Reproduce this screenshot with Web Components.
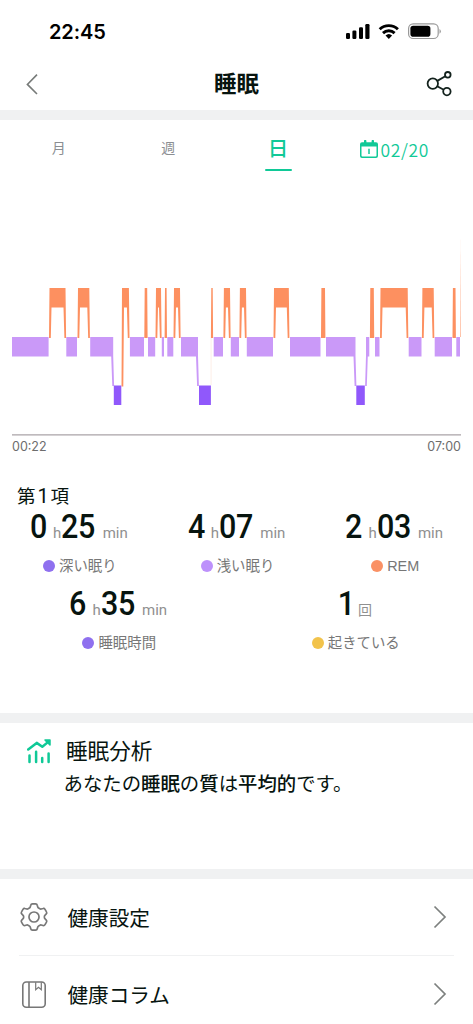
<!DOCTYPE html>
<html lang="ja">
<head>
<meta charset="utf-8">
<title>睡眠</title>
<style>
html,body{margin:0;padding:0;background:#fff}
body{width:473px;height:1024px;overflow:hidden;font-family:"Noto Sans CJK JP",sans-serif;color:#07140f}
</style>
</head>
<body>
<sleep-app></sleep-app>
<script>
const define = (name, html, setup) => customElements.define(name, class extends HTMLElement {
  connectedCallback() {
    if (this.shadowRoot) return;
    const root = this.attachShadow({mode: 'open'});
    root.innerHTML = html;
    if (setup) setup(this, root);
  }
});

define('status-bar', `
<style>
:host{display:flex;height:57px;box-sizing:border-box;padding:7px 31px 0 49px;align-items:center;justify-content:space-between}
.time{font:600 20px/24px Inter,sans-serif;color:#000;letter-spacing:-0.1px}
svg{display:block}
</style>
<span class="time">22:45</span>
<svg width="98" height="20" viewBox="344 22 98 20">
<g><rect x="346" y="33" width="4" height="6" rx="1.2"/><rect x="352.4" y="30.5" width="4" height="8.5" rx="1.2"/><rect x="359" y="27.3" width="4" height="11.7" rx="1.2"/><rect x="365.3" y="24" width="4.2" height="15" rx="1.2"/></g>
<g fill="none" stroke="#000" stroke-width="2.9"><path d="M379.7 29.3a13 13 0 0 1 18.2 0"/><path d="M383 33.1a8.4 8.4 0 0 1 11.6 0"/></g>
<path d="M388.8 38.9l-3.3-3.3a4.8 4.8 0 0 1 6.6 0z"/>
<rect x="408.6" y="23.9" width="29.6" height="14.6" rx="4.6" fill="none" stroke="#999" stroke-width="1.2"/>
<rect x="410.4" y="25.7" width="20" height="11" rx="2.8"/>
<path d="M439.5 28.9a2.8 2.8 0 0 1 0 4.8z" fill="#999"/>
</svg>`);

define('nav-bar', `
<style>
:host{display:grid;grid-template-columns:60px 1fr 60px;height:53px;align-items:center}
h1{margin:0;text-align:center;font-weight:700;font-size:22.4px;line-height:32px;padding-bottom:4px}
svg{display:block}
</style>
<svg width="60" height="53" viewBox="0 57 60 53" fill="none" stroke="#777b79" stroke-width="1.6"><path d="M37 74.6l-9.6 9.8 9.6 9.6"/></svg>
<h1><slot></slot></h1>
<svg width="60" height="53" viewBox="413 57 60 53" fill="none" stroke="#13221d" stroke-width="1.8"><circle cx="432.8" cy="83.6" r="5.2"/><circle cx="447.8" cy="74.8" r="2.8"/><circle cx="446.9" cy="91.6" r="3.7"/><path d="M437.3 80.9l8-4.7M437.2 86.2l6.5 3.6"/></svg>`);

define('section-gap', `<style>:host{display:block;height:10px;background:#f0f1f2}</style>`);

define('range-tabs', `
<style>
:host{display:grid;grid-template-columns:repeat(4,109.5px);padding-left:4px;height:60px;text-align:center;color:#8b8e92;font-size:14px}
div{height:51px;line-height:55px;box-sizing:border-box}
.on{color:#10c997;font-size:20.5px;font-weight:500;display:flex;flex-direction:column;align-items:center;line-height:55px;justify-content:space-between;padding-left:.5px}
.on span{height:48px}
.on i{width:27px;height:2.5px;border-radius:1px;background:#10c997;flex:none}
.date{color:#10c997;display:flex;align-items:center;justify-content:center;padding-left:14px;font-weight:350;font-size:17.5px;letter-spacing:.6px;line-height:24px;gap:3px;height:59px}
.date svg{margin-top:-1px}
</style>
<div>月</div><div>週</div><div class="on"><span>日</span><i></i></div>
<div class="date"><svg width="18" height="18" viewBox="0 0 18 18"><path fill="#10c997" fill-rule="evenodd" d="M2 2.2h2V1a1.2 1.2 0 0 1 2.4 0v1.2h5.2V1A1.2 1.2 0 0 1 14 1v1.2h2a2 2 0 0 1 2 2V16a2 2 0 0 1-2 2H2a2 2 0 0 1-2-2V4.200a2 2 0 0 1 2-2zM1.500 6.600v9q0 .9.9.9h13.200q.9 0 .9-.9v-9z"/><path d="M9 8.800v5.200" stroke="#10c997" stroke-width="1.500"/></svg><span>02/20</span></div>`);

define('sleep-chart', `
<style>
:host{display:block;height:300px;font:12.5px/16px Inter,sans-serif;color:#6d6d6d}
svg{display:block}
.axis{display:flex;justify-content:space-between;padding:3px 12px 0}
</style>
<svg width="473" height="256" viewBox="0 180 473 256">
<path class="light" fill="#ca99f8"/><path class="rem" fill="#fd9060"/><path class="deep" fill="#9058fb"/>
<path d="M211.1 338v47" stroke="#fd9060" stroke-width=".7" opacity=".2"/>
<path d="M460.6 239l.4 98h-.9z" fill="#fd9060" opacity=".6"/>
<path d="M12 434.800h449" stroke="#aaa3a7" stroke-width="1.200"/>
</svg>
<div class="axis"><span>00:22</span><span>07:00</span></div>`, (el, root) => {
  const box = (y) => ([a, b]) => `M${a} ${y}H${b}V${y + 19.5}H${a}Z`;
  const light = [[12,48.6],[66.3,77],[90.2,113.2],[129.9,144],[148,155.2],[161.8,164],[167.3,173.3],[181,198],[213.7,223],[230.8,239],[246.8,273],[290,320.5],[326,355.5],[366,369.3],[375,379.5],[408.7,421.5],[434.7,452],[456.3,460]];
  const rem = [[49.5,65.5],[78,89.3],[122,128.9],[156,161],[174,180],[223.9,230],[239.9,246],[274,288.8],[380.5,407.7],[422.4,433.7]];
  const thin = [[144.7,147.2],[165,166.6],[211.3,212.7],[321.4,325],[370.3,373.8],[452.9,455.5]];
  const arch = ([a, b]) => {
    const foot = a === 122 ? 386.5 : 338;
    return `M${a} 288H${b}L${b + .6} 338H${b - 1.1}L${b - 2} 307.5H${a + 2}L${a + 1.3} ${foot}H${a - .5}Z`;
  };
  const fall = x => `M${x - 2} 356H${x}L${x + .9} 386H${x - .9}Z`;
  root.querySelector('.light').setAttribute('d', light.map(box(337)).join('') + [113.2,198,355.5].map(fall).join('') + 'M366 356H367.8L366.8 386H365.1Z');
  root.querySelector('.rem').setAttribute('d', rem.map(arch).join('') + thin.map(([a,b]) => `M${a} 288H${b}L${b + .4} 338H${a - .4}Z`).join(''));
  root.querySelector('.deep').setAttribute('d', [[113.8,121.3],[199,210.9],[356.3,364.8]].map(box(385.5)).join(''));
});

define('sleep-stat', `
<style>
:host{display:flex;flex-direction:column;align-items:center;height:76.5px;box-sizing:border-box}
.value{height:37px;line-height:37px;display:flex;align-items:baseline;font-family:Roboto,"Noto Sans CJK JP",sans-serif;white-space:nowrap}
b{font-weight:500;font-size:33.5px;letter-spacing:-.4px;display:block;transform:scaleX(.91)}
b.hh{margin-right:-1.5px;transform-origin:left}
b.mm{margin-right:-3.5px;transform-origin:left}
small{font-weight:400;font-size:15px;color:#909090}
.h{margin:0 0 0 6px}.m{margin-left:7.5px}.c{margin-left:2px;font-size:14px}
.label{display:flex;align-items:center;gap:4px;font-family:"Liberation Sans","Noto Sans CJK JP",sans-serif;font-size:14.4px;line-height:20px;color:#777;margin-top:11px;padding-left:2px}
.label i{width:12px;height:12px;border-radius:50%;background:var(--dot)}
</style>
<div class="value"></div><div class="label"><i></i><slot></slot></div>`, (el, root) => {
  const h = el.getAttribute('hours'), m = el.getAttribute('minutes'), c = el.getAttribute('count');
  root.querySelector('.value').innerHTML = c ? `<b>${c}</b><small class="c">回</small>` : `<b class="hh">${h}</b><small class="h">h</small><b class="mm">${m}</b><small class="m">min</small>`;
});

define('sleep-summary', `
<style>
:host{display:block;height:233px}
h2{margin:0;padding:2px 0 0 17px;font-weight:400;font-size:18.5px;line-height:26px;height:26px;letter-spacing:.1px}
h2 span{display:inline-block;width:15px;text-align:center;font-family:Roboto,sans-serif;font-size:20px}
.row{display:grid;grid-template-columns:repeat(3,1fr)}
.two{grid-template-columns:repeat(2,1fr)}
</style>
<h2>第<span>1</span>項</h2>
<div class="row">
<sleep-stat hours="0" minutes="25" style="--dot:#8f70ef">深い眠り</sleep-stat>
<sleep-stat hours="4" minutes="07" style="--dot:#bd91fb">浅い眠り</sleep-stat>
<sleep-stat hours="2" minutes="03" style="--dot:#fa9165">REM</sleep-stat>
</div>
<div class="row two">
<sleep-stat hours="6" minutes="35" style="--dot:#8f70ef">睡眠時間</sleep-stat>
<sleep-stat count="1" style="--dot:#f2c34b">起きている</sleep-stat>
</div>`);

define('sleep-analysis', `
<style>
:host{display:grid;grid-template-columns:39px 1fr;height:146px;box-sizing:border-box;padding:12px 0 0 27px;align-content:start}
h2{margin:-1px 0 1px;font-weight:400;font-size:21.6px;line-height:32px}
p{margin:0 0 0 -2.5px;grid-column:2;font-size:19.4px;line-height:32px;white-space:nowrap}
b{font-weight:500}
svg{margin-top:4px}
</style>
<svg width="24" height="25" viewBox="27 739 24 25" fill="none" stroke="#10c997" stroke-width="2.5" stroke-linecap="round" stroke-linejoin="round"><path d="M28.2 749.5l8.5-6.6 5.600 3.900 6-4.900M29.5 755.6v6.4M36.1 751.8v10.2M42.2 757.9v4.1M48.6 753.6v8.4"/><path d="M45 740h5v5z" fill="#10c997" stroke-width="1.500"/></svg>
<h2>睡眠分析</h2>
<p>あなたの<b>睡眠</b>の<b>質</b>は<b>平均的</b>です。</p>`);

define('menu-row', `
<style>
:host{display:grid;grid-template-columns:48.5px 1fr 14px;align-items:center;height:77px;margin:0 19px;padding-right:7px;border-bottom:1px solid #f0f1f2;box-sizing:border-box;font-size:20.6px;line-height:30px}
svg{display:block}
span{padding-bottom:1px}
::slotted(svg){display:block}
</style>
<slot name="icon"></slot><span><slot></slot></span>
<svg width="14" height="24" viewBox="0 0 14 24" fill="none" stroke="#7d807f" stroke-width="1.7"><path d="M1.5 1.500l10.5 10.500L1.5 22.500"/></svg>`);

define('sleep-app', `
<style>
:host{display:block;width:473px}
</style>
<status-bar></status-bar>
<nav-bar>睡眠</nav-bar>
<section-gap></section-gap>
<range-tabs></range-tabs>
<sleep-chart></sleep-chart>
<sleep-summary></sleep-summary>
<section-gap></section-gap>
<sleep-analysis></sleep-analysis>
<section-gap></section-gap>
<menu-row><svg slot="icon" width="30" height="30" viewBox="0.700 0.700 28.600 28.600" fill="none" stroke="#777" stroke-width="1.6" stroke-linejoin="round"><circle cx="15" cy="15" r="4.8"/><path d="M13.500 2.500h3q1.300 0 1.600 1.300l.5 1.700q.2.700.8 1l1.200.7q.6.400 1.300.2l1.700-.5q1.200-.4 1.900.8l1.400 2.400q.7 1.100-.2 2l-1.300 1.300q-.5.500-.5 1.100v1q0 .6.500 1.100l1.300 1.300q.9.900.2 2l-1.400 2.400q-.7 1.200-1.900.8l-1.700-.5q-.7-.2-1.300.2l-1.200.7q-.6.300-.8 1l-.5 1.700q-.3 1.300-1.600 1.300h-3q-1.300 0-1.600-1.300l-.5-1.700q-.2-.7-.8-1l-1.200-.7q-.6-.4-1.300-.2l-1.700.5q-1.200.4-1.900-.8l-1.400-2.400q-.7-1.100.2-2l1.300-1.300q.5-.5.500-1.100v-1q0-.6-.5-1.100l-1.300-1.300q-.9-.9-.2-2l1.400-2.400q.7-1.200 1.900-.8l1.700.5q.7.200 1.300-.2l1.200-.7q.6-.3.800-1l.5-1.700q.3-1.300 1.600-1.300z"/></svg>健康設定</menu-row>
<menu-row><svg slot="icon" width="30" height="30" viewBox="0 0 30 30" fill="none" stroke="#777" stroke-width="1.6"><rect x="3.8" y="3" width="22.4" height="25.2" rx="3.5"/><path d="M10 3v25.200"/><path d="M16.700 3.200v7.500l2.800-2.300 2.800 2.300v-7.500" stroke-width="1.200"/></svg>健康コラム</menu-row>`);
</script>
</body>
</html>
